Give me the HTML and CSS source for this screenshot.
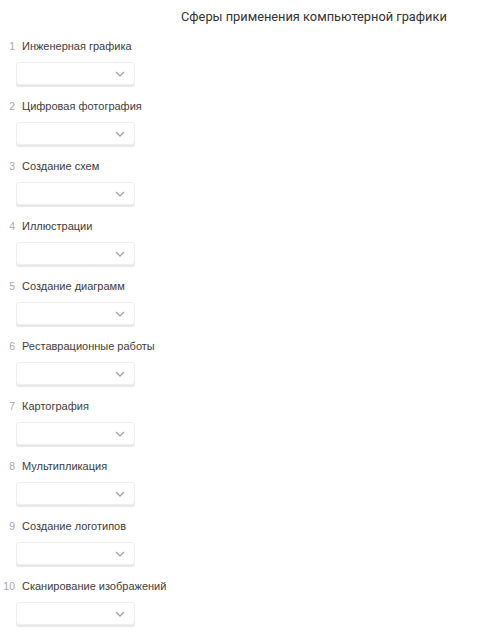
FILE: index.html
```html
<!DOCTYPE html>
<html>

<head>
    <meta charset="utf-8">
    <title>Сферы применения</title>
    <link rel="stylesheet" href="styles.css">
</head>

<body>
    <div class="quiz-title">Сферы применения компьютерной графики</div>
    <ol class="quiz-list">
        <li class="quiz-item">
            <div class="item-head"><span class="num">1</span><span class="label">Инженерная графика</span></div>
            <div class="select"><svg class="chev" width="10" height="6" viewBox="0 0 10 6"><path d="M1 1l4 4 4-4" fill="none" stroke="#a5a5a5" stroke-width="1.3"/></svg></div>
        </li>
        <li class="quiz-item">
            <div class="item-head"><span class="num">2</span><span class="label">Цифровая фотография</span></div>
            <div class="select"><svg class="chev" width="10" height="6" viewBox="0 0 10 6"><path d="M1 1l4 4 4-4" fill="none" stroke="#a5a5a5" stroke-width="1.3"/></svg></div>
        </li>
        <li class="quiz-item">
            <div class="item-head"><span class="num">3</span><span class="label">Создание схем</span></div>
            <div class="select"><svg class="chev" width="10" height="6" viewBox="0 0 10 6"><path d="M1 1l4 4 4-4" fill="none" stroke="#a5a5a5" stroke-width="1.3"/></svg></div>
        </li>
        <li class="quiz-item">
            <div class="item-head"><span class="num">4</span><span class="label">Иллюстрации</span></div>
            <div class="select"><svg class="chev" width="10" height="6" viewBox="0 0 10 6"><path d="M1 1l4 4 4-4" fill="none" stroke="#a5a5a5" stroke-width="1.3"/></svg></div>
        </li>
        <li class="quiz-item">
            <div class="item-head"><span class="num">5</span><span class="label">Создание диаграмм</span></div>
            <div class="select"><svg class="chev" width="10" height="6" viewBox="0 0 10 6"><path d="M1 1l4 4 4-4" fill="none" stroke="#a5a5a5" stroke-width="1.3"/></svg></div>
        </li>
        <li class="quiz-item">
            <div class="item-head"><span class="num">6</span><span class="label">Реставрационные работы</span></div>
            <div class="select"><svg class="chev" width="10" height="6" viewBox="0 0 10 6"><path d="M1 1l4 4 4-4" fill="none" stroke="#a5a5a5" stroke-width="1.3"/></svg></div>
        </li>
        <li class="quiz-item">
            <div class="item-head"><span class="num">7</span><span class="label">Картография</span></div>
            <div class="select"><svg class="chev" width="10" height="6" viewBox="0 0 10 6"><path d="M1 1l4 4 4-4" fill="none" stroke="#a5a5a5" stroke-width="1.3"/></svg></div>
        </li>
        <li class="quiz-item">
            <div class="item-head"><span class="num">8</span><span class="label">Мультипликация</span></div>
            <div class="select"><svg class="chev" width="10" height="6" viewBox="0 0 10 6"><path d="M1 1l4 4 4-4" fill="none" stroke="#a5a5a5" stroke-width="1.3"/></svg></div>
        </li>
        <li class="quiz-item">
            <div class="item-head"><span class="num">9</span><span class="label">Создание логотипов</span></div>
            <div class="select"><svg class="chev" width="10" height="6" viewBox="0 0 10 6"><path d="M1 1l4 4 4-4" fill="none" stroke="#a5a5a5" stroke-width="1.3"/></svg></div>
        </li>
        <li class="quiz-item">
            <div class="item-head"><span class="num">10</span><span class="label">Сканирование изображений</span></div>
            <div class="select"><svg class="chev" width="10" height="6" viewBox="0 0 10 6"><path d="M1 1l4 4 4-4" fill="none" stroke="#a5a5a5" stroke-width="1.3"/></svg></div>
        </li>
    </ol>
</body>

</html>
```

FILE: styles.css
```css
body {
    margin: 0;
    background: #ffffff;
    font-family: "Liberation Sans", Arial, sans-serif;
    color: #444444;
}

.quiz-title {
    padding: 9px 0 0 181px;
    height: 29px;
    font-family: Roboto, "Liberation Sans", sans-serif;
    font-size: 12.8px;
    font-weight: 400;
    line-height: 16px;
    color: #333333;
}

.quiz-list {
    list-style: none;
    margin: 0;
    padding: 0;
}

.quiz-item {
    height: 60px;
}

.item-head {
    display: flex;
    align-items: baseline;
    height: 16px;
    line-height: 16px;
    font-size: 11px;
}

.num {
    width: 15px;
    text-align: right;
    color: #a8a8a8;
    font-size: 10.5px;
}

.label {
    margin-left: 7px;
    color: #3d3d3d;
}

.select {
    display: flex;
    justify-content: flex-end;
    align-items: center;
    box-sizing: border-box;
    width: 119px;
    height: 23px;
    margin: 8px 0 0 16px;
    padding-right: 9px;
    border: 1px solid #eeeeee;
    border-radius: 3px;
    box-shadow: 0 2px 0 #e8e8e8;
    background: #ffffff;
}
```
